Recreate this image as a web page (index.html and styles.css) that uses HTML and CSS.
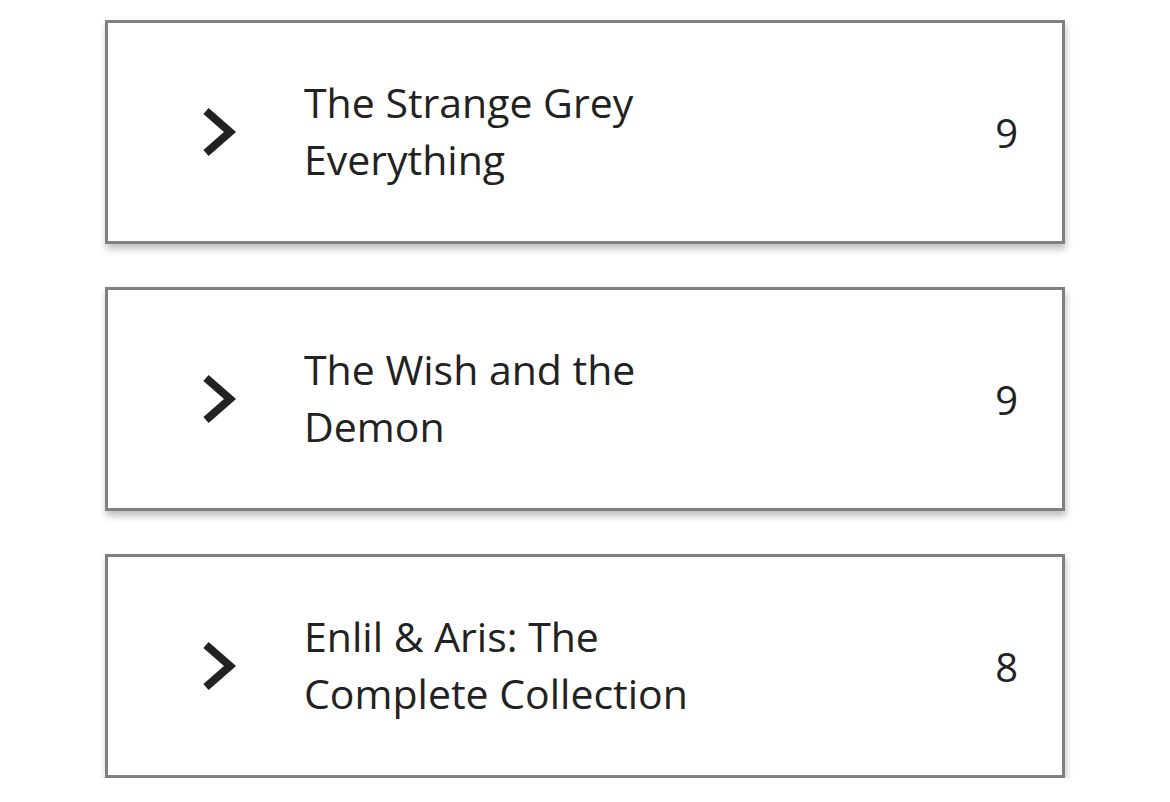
FILE: index.html
```html
<!DOCTYPE html>
<html>
<head>
<meta charset="utf-8">
<link rel="stylesheet" href="styles.css">
</head>
<body>
<div class="list">
  <div class="card">
    <svg class="chev" width="40" height="58" viewBox="0 0 40 58"><polyline points="6,8 30,29 6,50" fill="none" stroke="#222" stroke-width="8" stroke-linejoin="miter"/></svg>
    <div class="title">The Strange Grey<br>Everything</div>
    <div class="count">9</div>
  </div>
  <div class="card">
    <svg class="chev" width="40" height="58" viewBox="0 0 40 58"><polyline points="6,8 30,29 6,50" fill="none" stroke="#222" stroke-width="8" stroke-linejoin="miter"/></svg>
    <div class="title">The Wish and the<br>Demon</div>
    <div class="count">9</div>
  </div>
  <div class="card">
    <svg class="chev" width="40" height="58" viewBox="0 0 40 58"><polyline points="6,8 30,29 6,50" fill="none" stroke="#222" stroke-width="8" stroke-linejoin="miter"/></svg>
    <div class="title">Enlil &amp; Aris: The<br>Complete Collection</div>
    <div class="count">8</div>
  </div>
</div>
</body>
</html>
```
FILE: styles.css
```css
html, body {
  margin: 0;
  padding: 0;
  background: #fff;
}
body {
  font-family: "Open Sans", "Noto Sans", sans-serif;
  color: #222;
}
.list {
  display: flex;
  flex-direction: column;
  gap: 43px;
  padding: 20px 0 0 105px;
}
.card {
  box-sizing: border-box;
  width: 960px;
  height: 224px;
  border: 3px solid #808080;
  box-shadow: 1px 5px 7px rgba(0, 0, 0, 0.25);
  display: flex;
  align-items: center;
  padding: 0 44px 0 92px;
}
.chev {
  flex: none;
  display: block;
}
.title {
  flex: 1;
  margin-left: 64px;
  padding-bottom: 2px;
  font-size: 41px;
  line-height: 57px;
}
.count {
  font-size: 40px;
  line-height: 57px;
}
```
